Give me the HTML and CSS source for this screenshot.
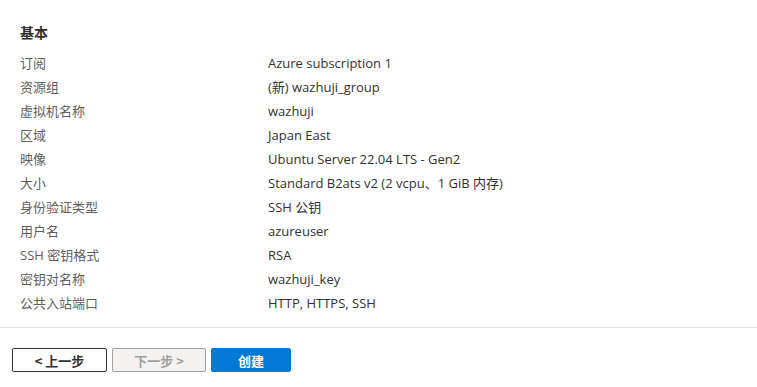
FILE: index.html
```html
<!DOCTYPE html>
<html lang="zh-CN">
   <head>
      <meta charset="UTF-8">
      <meta name="viewport" content="width=device-width, initial-scale=1.0">
      <title>查看 + 创建</title>
      <link rel="stylesheet" href="styles.css">
   </head>
   <body>
      <div class="review">
         <h2 class="section-title">基本</h2>
         <div class="summary">
            <div class="row"><span class="label">订阅</span><span class="value">Azure subscription 1</span></div>
            <div class="row"><span class="label">资源组</span><span class="value">(新) wazhuji_group</span></div>
            <div class="row"><span class="label">虚拟机名称</span><span class="value">wazhuji</span></div>
            <div class="row"><span class="label">区域</span><span class="value">Japan East</span></div>
            <div class="row"><span class="label">映像</span><span class="value">Ubuntu Server 22.04 LTS - Gen2</span></div>
            <div class="row"><span class="label">大小</span><span class="value">Standard B2ats v2 (2 vcpu、1 GiB 内存)</span></div>
            <div class="row"><span class="label">身份验证类型</span><span class="value">SSH 公钥</span></div>
            <div class="row"><span class="label">用户名</span><span class="value">azureuser</span></div>
            <div class="row"><span class="label">SSH 密钥格式</span><span class="value">RSA</span></div>
            <div class="row"><span class="label">密钥对名称</span><span class="value">wazhuji_key</span></div>
            <div class="row"><span class="label">公共入站端口</span><span class="value">HTTP, HTTPS, SSH</span></div>
         </div>
      </div>
      <footer class="actions">
         <button class="btn btn-back">&lt; 上一步</button>
         <button class="btn btn-next" disabled>下一步 &gt;</button>
         <button class="btn btn-create">创建</button>
      </footer>
   </body>
</html>
```
FILE: styles.css
```css
body {
font-family: "Open Sans", "Noto Sans CJK SC", sans-serif;
font-size: 13px;
margin: 0;
padding: 0;
background-color: #fff;
color: #323130;
}
.review {
padding: 23px 20px 0 20px;
}
.section-title {
font-size: 14px;
font-weight: 700;
line-height: 20px;
margin: 0 0 8px 0;
color: #323130;
}
.row {
display: grid;
grid-template-columns: 248px 1fr;
line-height: 24px;
height: 24px;
}
.label {
color: #605e5c;
}
.value {
color: #323130;
}
.actions {
margin-top: 12px;
border-top: 1px solid #e1dfdd;
padding: 20px 12px;
display: flex;
gap: 5px;
}
.btn {
height: 24px;
box-sizing: border-box;
font-family: "Noto Sans CJK SC", sans-serif;
font-size: 13px;
font-weight: 700;
border-radius: 2px;
padding: 0;
}
.btn-back {
width: 95px;
background-color: #fff;
border: 1px solid #323130;
color: #323130;
}
.btn-next {
width: 94px;
background-color: #f3f2f1;
border: 1px solid #a19f9d;
color: #a19f9d;
}
.btn-create {
width: 80px;
background-color: #0078d4;
border: 1px solid #0078d4;
color: #fff;
}
```
